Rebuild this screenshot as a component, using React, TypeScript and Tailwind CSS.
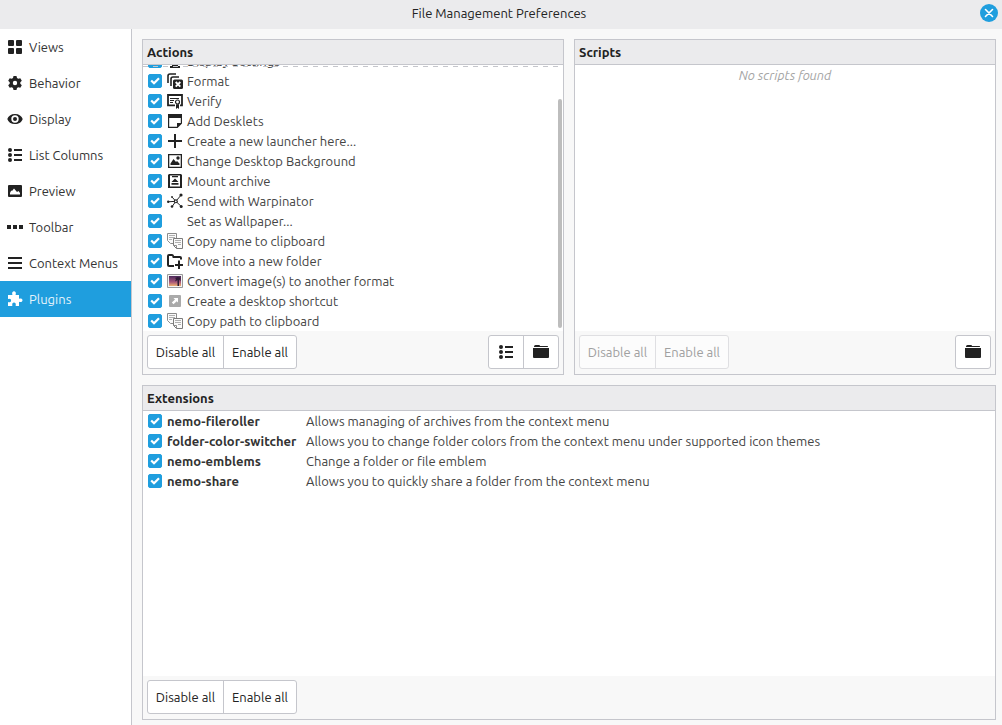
import React, { useState, ReactNode } from 'react';

const Icon: React.FC<{ children?: ReactNode }> = ({ children }) => (
  <svg viewBox="0 0 16 16" className="size-4 shrink-0" fill="currentColor" aria-hidden="true">
    {children}
  </svg>
);

const ListIcon = () => (
  <Icon>
    <circle cx="3" cy="3" r="2" />
    <circle cx="3" cy="8" r="2" />
    <circle cx="3" cy="13" r="2" />
    <path d="M7 2h8v2H7zM7 7h8v2H7zM7 12h8v2H7z" />
  </Icon>
);

const FolderIcon = () => (
  <Icon>
    <path d="M1 3V2.500Q1 1 2.500 1H6q1 0 1 1h7.500q.5 0 .5 1z" />
    <path d="M0 4h16v9q0 1-1 1H1q-1 0-1-1z" />
  </Icon>
);

const ClipboardIcon = () => (
  <Icon>
    <path d="M.5.5h9v10h-6l-3-3z" fill="#fbfbfb" stroke="#8c8c8c" />
    <path d="M2 2.500h6M2 4.500h6M2 6.500h3" stroke="#b0b0b0" fill="none" />
    <path d="M6.500 5.500h9v10h-6l-3-3z" fill="#fbfbfb" stroke="#7c7c7c" />
    <path d="M6.500 12.500h3v3" stroke="#8c8c8c" fill="none" />
    <path d="M8 7.500h6M8 9.500h6M11 11.500h3" stroke="#b0b0b0" fill="none" />
  </Icon>
);

const pages = [
  {
    name: 'Views',
    icon: (
      <Icon>
        <rect x="1" y="1" width="6" height="6" rx="1" />
        <rect x="9" y="1" width="6" height="6" rx="1" />
        <rect x="1" y="9" width="6" height="6" rx="1" />
        <rect x="9" y="9" width="6" height="6" rx="1" />
      </Icon>
    ),
  },
  {
    name: 'Behavior',
    icon: (
      <Icon>
        <path
          fillRule="evenodd"
          d="M6.500 1h3l.5 2 1.300.8 2-.6 1.500 2.600L13.300 7.200v1.600l1.500 1.400-1.500 2.600-2-.6L10 13l-.5 2h-3L6 13l-1.300-.8-2 .6-1.500-2.600 1.500-1.400V7.200L1.200 5.800l1.500-2.600 2 .6L6 3zM8 5.800a2.200 2.200 0 1 0 0 4.400 2.200 2.200 0 0 0 0-4.400z"
        />
      </Icon>
    ),
  },
  {
    name: 'Display',
    icon: (
      <Icon>
        <path
          fillRule="evenodd"
          d="M8 3C4 3 1.200 5 .3 8 1.200 11 4 13 8 13s6.800-2 7.700-5C14.800 5 12 3 8 3zm0 1.300a3.700 3.700 0 1 1 0 7.400 3.700 3.700 0 0 1 0-7.400zM8 6a2 2 0 1 0 0 4 2 2 0 0 0 0-4z"
        />
      </Icon>
    ),
  },
  { name: 'List Columns', icon: <ListIcon /> },
  {
    name: 'Preview',
    icon: (
      <Icon>
        <path
          fillRule="evenodd"
          d="M2 2h12q1 0 1 1v10q0 1-1 1H2q-1 0-1-1V3q0-1 1-1zm1 9.500h10V10l-1.500-2-1.500 1L7 5.500 5 8 4.200 7.500 3 10z"
        />
      </Icon>
    ),
  },
  {
    name: 'Toolbar',
    icon: (
      <Icon>
        <path d="M0 6h4v4H0zM6 6h4v4H6zM12 6h4v4h-4z" />
      </Icon>
    ),
  },
  {
    name: 'Context Menus',
    icon: (
      <Icon>
        <path d="M1 2h14v2H1zM1 7h14v2H1zM1 12h14v2H1z" />
      </Icon>
    ),
  },
  {
    name: 'Plugins',
    icon: (
      <Icon>
        <path d="M2 4h3q.7 0 .3-1A1.900 1.900 0 1 1 8.700 3q-.4 1 .3 1h3v3.300q0 .7 1 .3a1.800 1.800 0 1 1 0 3.300q-1-.4-1 .3V15H9q-.6 0-.3-1a1.800 1.800 0 1 0-3.400 0q.3 1-.3 1H1v-3.500q0-.6 1-.3a1.700 1.700 0 1 0 0-3.300q-1 .3-1-.3V4z" />
      </Icon>
    ),
  },
];

const actions = [
  {
    name: 'Display Settings',
    icon: (
      <Icon>
        <path fillRule="evenodd" d="M0 1h16v11H0zm2 2v7h12V3zM5 12h6v1h2v2H3v-2h2z" />
      </Icon>
    ),
  },
  {
    name: 'Format',
    icon: (
      <Icon>
        <path d="M1 10V3q0-2 2-2h6M4 13V6q0-2 2-2h6" fill="none" stroke="currentColor" strokeWidth="1.600" />
        <rect x="6" y="6.500" width="10" height="9.500" rx="1.500" />
        <path d="m8.700 9 4.600 4.600m0-4.600-4.600 4.600" stroke="#fff" strokeWidth="1.900" />
      </Icon>
    ),
  },
  {
    name: 'Verify',
    icon: (
      <Icon>
        <path d="M8 12.300H1V2h14v10.300h-2" fill="none" stroke="currentColor" strokeWidth="1.800" />
        <path d="M3 5.500h9M3 7.500h4M3 9.500h3" fill="none" stroke="currentColor" />
        <circle cx="10.500" cy="9" r="2" fill="#fff" stroke="currentColor" strokeWidth="1.200" />
        <path d="M9 11.200h3V16l-1.500-1.200L9 16z" />
      </Icon>
    ),
  },
  {
    name: 'Add Desklets',
    icon: (
      <Icon>
        <path fillRule="evenodd" d="M1 1h14v9.500L10.500 15H1zm1.200 4v8.800H10V10h3.800V5z" />
      </Icon>
    ),
  },
  {
    name: 'Create a new launcher here...',
    icon: (
      <Icon>
        <path d="M7 1h2v6h6v2H9v6H7V9H1V7h6z" />
      </Icon>
    ),
  },
  {
    name: 'Change Desktop Background',
    icon: (
      <Icon>
        <path fillRule="evenodd" d="M1 1h14v14H1zm1.300 1.300v11.400h11.400V2.300z" />
        <path d="M3.500 12v-1.500l3-4.500L9 9l1-1 2.500 2.500V12z" />
        <circle cx="11" cy="5" r="1.700" />
      </Icon>
    ),
  },
  {
    name: 'Mount archive',
    icon: (
      <Icon>
        <path fillRule="evenodd" d="M2 1h12l1 1v13H1V2zm1 1.500v11h10v-11z" />
        <path d="M5 3h6v1.200H5zM8 5.500 11.500 9h-7zM4.500 10h7v1.700h-7z" />
      </Icon>
    ),
  },
  {
    name: 'Send with Warpinator',
    icon: (
      <Icon>
        <path
          d="m8.800 8.300 4.700-5.500M8.800 8.300 1 8.800M8.800 8.300l5 4.700M8.800 8.300 5.500 13M8.800 8.300l-3.500-4"
          fill="none"
          stroke="currentColor"
        />
        <circle cx="8.800" cy="8.300" r="2" />
        <circle cx="8.800" cy="8.300" r=".9" fill="#fff" />
        <circle cx="14" cy="2" r="1.600" />
        <circle cx="1.200" cy="8.800" r="1.200" />
        <circle cx="14.200" cy="13.500" r="1.500" />
        <circle cx="5" cy="13.500" r="1.300" />
        <circle cx="5" cy="4" r=".9" />
      </Icon>
    ),
  },
  { name: 'Set as Wallpaper...', icon: <Icon /> },
  { name: 'Copy name to clipboard', icon: <ClipboardIcon /> },
  {
    name: 'Move into a new folder',
    icon: (
      <Icon>
        <path d="M7 13H2q-1 0-1-1V3q0-1 1-1h3q1 0 1.500 2H13q1 0 1 1v1.500" fill="none" stroke="currentColor" strokeWidth="2" />
        <path d="M11 7.500h2V11h3v2h-3v3h-2v-3H8v-2h3z" />
      </Icon>
    ),
  },
  {
    name: 'Convert image(s) to another format',
    icon: (
      <Icon>
        <defs>
          <linearGradient id="sunset" x1="0" y1="0" x2="0" y2="1">
            <stop offset="0" stopColor="#4b2a5c" />
            <stop offset=".6" stopColor="#a8567a" />
            <stop offset="1" stopColor="#f0b070" />
          </linearGradient>
        </defs>
        <path d="M.5 1.500h15v13H.5z" fill="#f4f4f4" stroke="#999" />
        <path d="M2 3h12v10H2z" fill="url(#sunset)" />
        <path d="m8 5 2.500-1 3 .5V8l-1.500-1.500V13h-1.500V7L8 8.500 9 6z" fill="#2e1a35" />
      </Icon>
    ),
  },
  {
    name: 'Create a desktop shortcut',
    icon: (
      <Icon>
        <rect x="2" y="2" width="12" height="12" rx="1" fill="#aaa" />
        <path d="M6.500 5H11v4.500L9.700 8.200 6.500 11.300 4.800 9.600 8 6.400z" fill="#fff" />
      </Icon>
    ),
  },
  { name: 'Copy path to clipboard', icon: <ClipboardIcon /> },
];

const extensions = [
  { name: 'nemo-fileroller', text: 'Allows managing of archives from the context menu' },
  {
    name: 'folder-color-switcher',
    text: 'Allows you to change folder colors from the context menu under supported icon themes',
  },
  { name: 'nemo-emblems', text: 'Change a folder or file emblem' },
  { name: 'nemo-share', text: 'Allows you to quickly share a folder from the context menu' },
];

const CheckBox: React.FC<{ id: string; checked: boolean; onChange: () => void }> = ({ id, checked, onChange }) => (
  <span className="grid size-3.5 shrink-0">
    <input
      type="checkbox"
      id={id}
      checked={checked}
      onChange={onChange}
      className="peer col-start-1 row-start-1 size-3.5 appearance-none rounded-xs border border-[#c5c6cc] bg-white checked:border-[#1f9ede] checked:bg-[#1f9ede]"
    />
    <svg
      viewBox="0 0 14 14"
      className="pointer-events-none invisible col-start-1 row-start-1 size-3.5 peer-checked:visible"
      aria-hidden="true"
    >
      <path d="m3.200 6.500 2.800 2.800 5-5" fill="none" stroke="#fff" strokeWidth="2.200" />
    </svg>
  </span>
);

const Panel: React.FC<{ title: string; className?: string; footer: ReactNode; children: ReactNode }> = ({
  title,
  className = '',
  footer,
  children,
}) => (
  <section className={`flex min-h-0 min-w-0 flex-col border border-[#c5c6cc] ${className}`}>
    <h2 className="shrink-0 border-b border-[#c5c6cc] bg-[#ebebed] px-1 text-[13px] leading-6 font-bold text-[#222]">
      {title}
    </h2>
    <div className="relative min-h-0 flex-1 bg-white">{children}</div>
    <footer className="flex shrink-0 justify-between px-1 pt-1 pb-[5px]">{footer}</footer>
  </section>
);

const ButtonGroup: React.FC<{ children: ReactNode; disabled?: boolean }> = ({ children, disabled }) => (
  <div
    className={
      disabled
        ? 'flex divide-x divide-[#dfdfe2] rounded-[3px] border border-[#dfdfe2] bg-[#fcfcfc] text-[#a0a0a0]'
        : 'flex divide-x divide-[#c5c6cc] rounded-[3px] border border-[#c5c6cc] bg-white text-[#222]'
    }
  >
    {children}
  </div>
);

const BulkButtons: React.FC<{ disabled?: boolean; onSet?: (on: boolean) => void }> = ({ disabled, onSet }) => (
  <ButtonGroup disabled={disabled}>
    <button type="button" disabled={disabled} onClick={() => onSet?.(false)} className="h-8 w-[76px] whitespace-nowrap">
      Disable all
    </button>
    <button type="button" disabled={disabled} onClick={() => onSet?.(true)} className="h-8 w-[72px] whitespace-nowrap">
      Enable all
    </button>
  </ButtonGroup>
);

const App: React.FC = () => {
  const [page, setPage] = useState('Plugins');
  const [off, setOff] = useState<string[]>([]);

  const toggle = (name: string) => {
    setOff(off.includes(name) ? off.filter((n) => n !== name) : [...off, name]);
  };

  const setAll = (names: string[], on: boolean) => {
    const rest = off.filter((n) => !names.includes(n));
    setOff(on ? rest : [...rest, ...names]);
  };

  return (
    <div className="flex h-screen flex-col overflow-hidden bg-[#f8f8f8] font-['Ubuntu','Noto_Sans',sans-serif] text-[13px] leading-5 text-[#444]">
      <header className="grid h-[29px] shrink-0 grid-cols-[1fr_auto_1fr] items-center bg-[#ebebed] pr-1 pb-[3px]">
        <h1 className="col-start-2 text-[#222]">File Management Preferences</h1>
        <button
          type="button"
          aria-label="Close"
          className="flex size-[18px] items-center justify-center justify-self-end rounded-full bg-[#1f9ede]"
        >
          <svg viewBox="0 0 18 18" className="size-[18px]" aria-hidden="true">
            <path d="m5.500 5.500 7 7m0-7-7 7" stroke="#fff" strokeWidth="1.600" strokeLinecap="round" />
          </svg>
        </button>
      </header>

      <div className="flex min-h-0 flex-1">
        <nav className="w-[132px] shrink-0 border-r border-[#c5c6cc] bg-white">
          {pages.map((p) => (
            <button
              key={p.name}
              type="button"
              onClick={() => setPage(p.name)}
              className={`flex h-9 w-full items-center gap-1.5 pl-[7px] whitespace-nowrap ${
                page === p.name ? 'bg-[#1f9ede] text-white' : 'text-[#222]'
              }`}
            >
              {p.icon}
              <span className={page === p.name ? 'text-[#e4f3fb]' : 'text-[#333]'}>{p.name}</span>
            </button>
          ))}
        </nav>

        <main className="grid min-w-0 flex-1 grid-cols-2 grid-rows-[336fr_335fr] gap-2.5 pt-2.5 pr-1.5 pb-[5px] pl-2.5">
          <Panel
            title="Actions"
            footer={
              <>
                <BulkButtons onSet={(on) => setAll(actions.map((a) => a.name), on)} />
                <ButtonGroup>
                  <button type="button" aria-label="Edit layout" className="flex h-8 w-[35px] items-center justify-center">
                    <ListIcon />
                  </button>
                  <button type="button" aria-label="Open actions folder" className="flex h-8 w-[34px] items-center justify-center">
                    <FolderIcon />
                  </button>
                </ButtonGroup>
              </>
            }
          >
            <ul className="flex h-full flex-col justify-end overflow-hidden px-[5px]">
              {actions.map((a) => (
                <li key={a.name} className="shrink-0">
                  <label className="flex h-5 items-center gap-[5px] whitespace-nowrap">
                    <CheckBox id={a.name} checked={!off.includes(a.name)} onChange={() => toggle(a.name)} />
                    <span className="flex items-center gap-1">
                      <span className="text-[#222]">{a.icon}</span>
                      {a.name}
                    </span>
                  </label>
                </li>
              ))}
            </ul>
            {/* more rows above */}
            <div className="absolute inset-x-0 top-px h-px bg-[repeating-linear-gradient(to_right,#c5c6cc_0_5px,transparent_5px_10px)]" />
            <div className="absolute right-px bottom-[3px] h-[86%] w-1 rounded-full bg-[#bdbdbd]" />
          </Panel>

          <Panel
            title="Scripts"
            footer={
              <>
                <BulkButtons disabled />
                <ButtonGroup>
                  <button type="button" aria-label="Open scripts folder" className="flex h-8 w-[34px] items-center justify-center">
                    <FolderIcon />
                  </button>
                </ButtonGroup>
              </>
            }
          >
            <p className="text-center text-[#a5a5a5] italic">No scripts found</p>
          </Panel>

          <Panel
            title="Extensions"
            className="col-span-2"
            footer={<BulkButtons onSet={(on) => setAll(extensions.map((e) => e.name), on)} />}
          >
            <table className="w-full">
              <tbody>
                {extensions.map((e) => (
                  <tr key={e.name} className="h-5">
                    <td className="w-6 p-0 pl-[5px]">
                      <CheckBox id={e.name} checked={!off.includes(e.name)} onChange={() => toggle(e.name)} />
                    </td>
                    <td className="w-[139px] p-0 font-bold whitespace-nowrap text-[#333]">
                      <label htmlFor={e.name}>{e.name}</label>
                    </td>
                    <td className="p-0">{e.text}</td>
                  </tr>
                ))}
              </tbody>
            </table>
          </Panel>
        </main>
      </div>
    </div>
  );
};

export default App;
